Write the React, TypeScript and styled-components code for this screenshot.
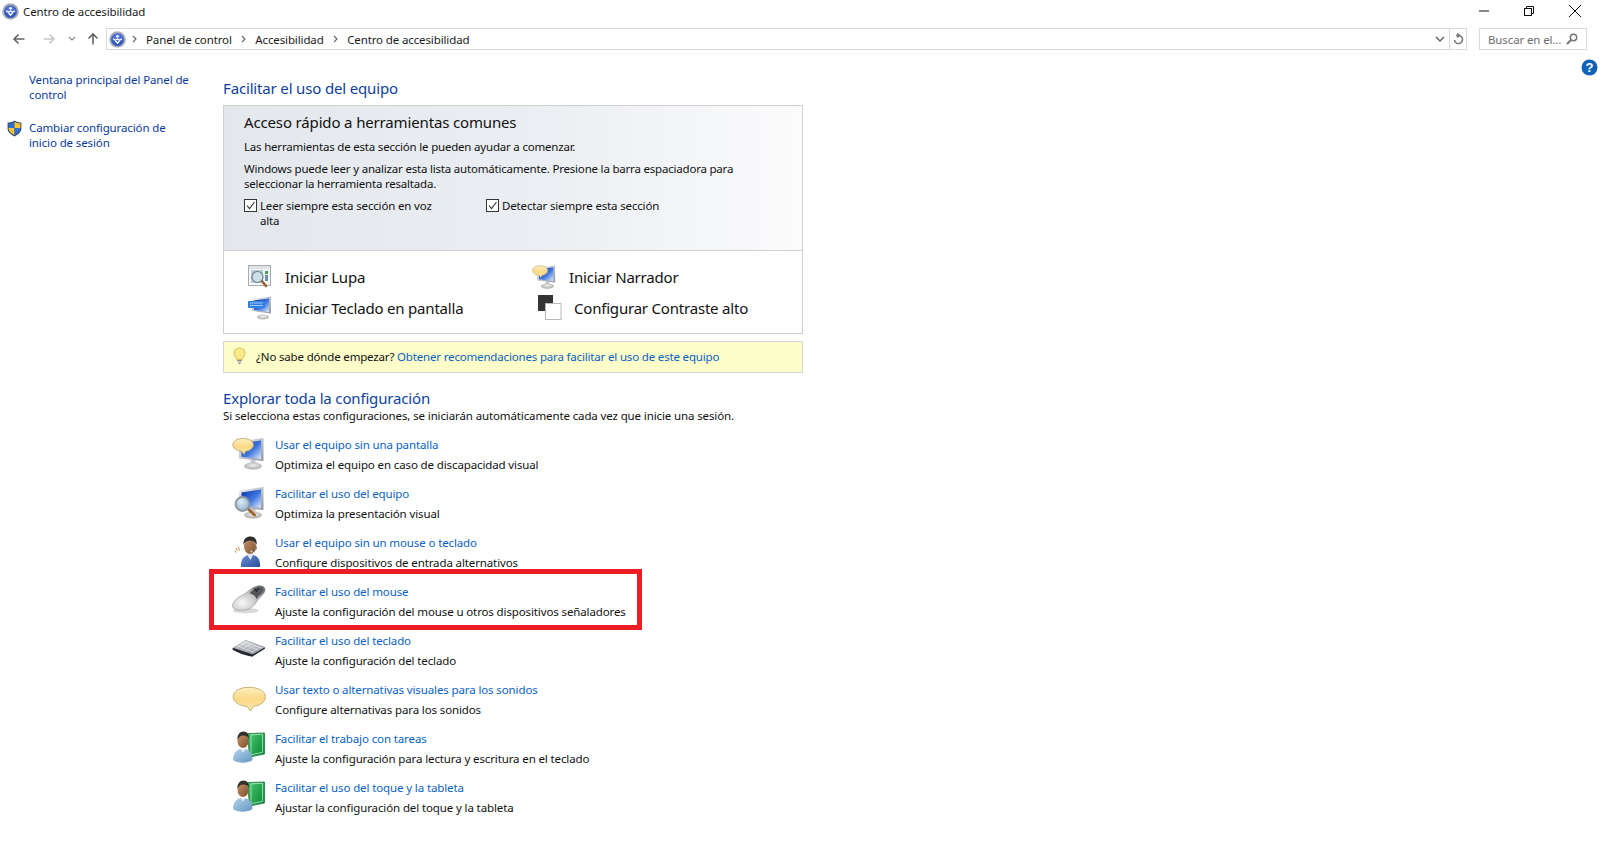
import React from "react";
import styled, { createGlobalStyle } from "styled-components";

const Global = createGlobalStyle`
  html, body { margin: 0; padding: 0; background: #fff; }
  body { font-family: "Noto Sans", "Open Sans", sans-serif; font-size: 11.5px; letter-spacing: -0.12px; color: #111; }
  * { box-sizing: border-box; }
`;

const Page = styled.div`
  width: 1600px; height: 858px; overflow: hidden; display: flex; flex-direction: column; background: #fff;
`;
const TitleBar = styled.div`
  height: 27px; display: flex; align-items: center; padding: 0 0 4px 2px; gap: 4px; flex: none;
`;
const TitleText = styled.span`
  flex: 1; color: #1a1a1a;
`;
const WindowButtons = styled.div`
  display: flex; align-items: center; height: 20px; margin-top: -2px; padding-right: 18px; gap: 33px;
`;
const NavBar = styled.div`
  height: 24px; display: flex; align-items: center; flex: none; padding-left: 12px;
`;
const NavButtons = styled.div`
  display: flex; align-items: center; width: 94px; flex: none;
`;
const AddressBar = styled.div`
  width: 1361px; height: 22px; border: 1px solid #d9d9d9; display: flex; align-items: center; padding-left: 2px; flex: none;
`;
const Crumb = styled.span`
  color: #1a1a1a; margin-right: 9.5px;
`;
const CrumbSep = styled.svg`
  margin-right: 9px; flex: none;
`;
const AddressEnd = styled.div`
  margin-left: auto; display: flex; align-items: center; height: 100%;
`;
const RefreshCell = styled.div`
  width: 17px; height: 100%; border-left: 1px solid #d9d9d9; margin-left: 4px; display: flex; align-items: center; justify-content: center;
`;
const SearchBox = styled.div`
  width: 108px; height: 22px; border: 1px solid #d9d9d9; margin-left: 12px; display: flex; align-items: center; justify-content: space-between; padding: 0 8px 0 8px; color: #6d6d6d; flex: none;
`;
const Body = styled.div`
  flex: 1; display: flex; min-height: 0;
`;
const Sidebar = styled.nav`
  width: 223px; flex: none; padding: 21px 0 0 7px; display: flex; flex-direction: column; gap: 18px;
`;
const SideItem = styled.div`
  display: flex; align-items: flex-start; gap: 7px;
`;
const SideIconSlot = styled.div`
  width: 15px; flex: none;
`;
const SideLink = styled.a`
  width: 165px; color: #0a3a9e; line-height: 15px;
`;
const Main = styled.main`
  width: 580px; flex: none; padding-top: 26px;
`;
const Heading = styled.h2`
  margin: 0; font-weight: 400; font-size: 15px; letter-spacing: -0.16px; line-height: 22px; color: #0f3f9f;
`;
const Panel = styled.section`
  margin-top: 6px; border: 1px solid #cfcfcf; height: 229px; display: flex; flex-direction: column;
`;
const PanelTop = styled.div`
  height: 145px; flex: none; padding: 5px 20px 0; background: linear-gradient(90deg, #e4e8ed 0%, #ebeef2 55%, #fbfbfc 100%); border-bottom: 1px solid #cfcfcf;
`;
const PanelTitle = styled.h3`
  margin: 0; font-weight: 400; font-size: 15px; letter-spacing: -0.15px; line-height: 22px; color: #111;
`;
const PanelText = styled.p`
  margin: ${p => p.$top}px 0 0; line-height: 15px; letter-spacing: -0.2px; color: #111; width: 500px;
`;
const CheckRow = styled.div`
  display: flex; margin-top: 7px;
`;
const CheckItem = styled.label`
  width: 242px; display: flex; gap: 3px; line-height: 15px; letter-spacing: -0.16px; color: #111;
`;
const CheckBox = styled.span`
  width: 13px; height: 13px; margin-top: 1px; border: 1px solid #333; background: #fff; display: flex; flex: none; align-items: center; justify-content: center;
`;
const CheckLabel = styled.span`
  width: 175px;
`;
const Tools = styled.div`
  flex: 1; display: grid; grid-template-columns: 285px 1fr; grid-auto-rows: 31px; padding: 10px 0 0 23px;
`;
const Tool = styled.div`
  display: flex; align-items: center; gap: ${p => p.$gap}px; font-size: 15px; letter-spacing: -0.2px; color: #111; padding-left: ${p => p.$pad || 0}px;
`;
const Hint = styled.div`
  margin-top: 7px; height: 32px; border: 1px solid #d6d6d6; background: #fdfdc9; display: flex; align-items: center; padding: 0 0 2px 9px; gap: 10px; letter-spacing: -0.17px; color: #111;
`;
const Link = styled.a`
  color: #0a62c4;
`;
const SectionHead = styled(Heading)`
  margin-top: 14px;
`;
const SectionSub = styled.p`
  margin: -1px 0 0; line-height: 15px; color: #111;
`;
const Rows = styled.div`
  margin-top: 11px; display: flex; flex-direction: column;
`;
const Row = styled.div`
  position: relative; height: 49px; display: flex; padding-left: 8px; gap: 8px;
`;
const RowIcon = styled.div`
  width: 36px; height: 36px; flex: none; padding-top: ${p => p.$top ?? 2}px;
`;
const RowText = styled.div`
  display: flex; flex-direction: column; gap: 5px; padding-top: 3px; white-space: nowrap;
`;
const RowTitle = styled.a`
  color: #0a62c4; line-height: 15px;
`;
const RowDesc = styled.span`
  color: #111; line-height: 15px;
`;
const Highlight = styled.div`
  position: absolute; left: -14px; top: -12px; width: 433px; height: 61px; border: 5px solid #ee1c25; pointer-events: none;
`;
const Help = styled.div`
  margin-left: auto; margin-right: 2px; margin-top: 8px;
`;
const NavGap = styled.span`
  width: 6px; flex: none;
`;

const AccessIcon = () => (
  <svg width="17" height="17" viewBox="0 0 16 16">
    <defs><radialGradient id="ac" cx=".5" cy=".35" r=".7"><stop offset="0" stopColor="#6688e6" /><stop offset="1" stopColor="#2346b4" /></radialGradient></defs>
    <circle cx="8" cy="8" r="7.8" fill="#a7adb7" />
    <circle cx="8" cy="8" r="6" fill="url(#ac)" />
    <circle cx="8" cy="5" r="1.2" fill="#fff" />
    <path d="M3.800 7.200L6 8.800 8 7.600l2 1.200 2.200-1.600M6 9l2 2.600L10 9" stroke="#fff" strokeWidth="1.200" fill="none" />
  </svg>
);
const Sep = () => (
  <CrumbSep width="5" height="8" viewBox="0 0 5 8"><path d="M1 1l3 3-3 3" stroke="#666" strokeWidth="1.100" fill="none" /></CrumbSep>
);
const Shield = () => (
  <svg width="15" height="17" viewBox="0 0 15 17">
    <path d="M7.500.5C5.500 2 3 2.600.6 2.600v6c0 3.600 3 6 6.900 7.900 3.900-1.900 6.900-4.300 6.900-7.900v-6C12 2.600 9.500 2 7.500.5z" fill="#3a4a68" />
    <path d="M7.500 1.700V8H1.600V3.500c2.200-.1 4.200-.6 5.900-1.800z" fill="#2f6fd0" />
    <path d="M7.500 1.700c1.700 1.200 3.700 1.700 5.900 1.800V8H7.500z" fill="#f6c531" />
    <path d="M1.600 8h5.900v7.200C4.200 13.600 1.800 11.500 1.600 8.600z" fill="#f6c531" />
    <path d="M7.500 8h5.900v.6c-.2 2.900-2.600 5-5.900 6.600z" fill="#2f6fd0" />
  </svg>
);

const Defs = () => (
  <svg width="0" height="0" style={{ position: "absolute" }}>
    <defs>
      <linearGradient id="screen" x1="0" y1="0" x2="1" y2="1"><stop offset="0" stopColor="#0a2fa8" /><stop offset=".55" stopColor="#3f78e0" /><stop offset="1" stopColor="#e4edfb" /></linearGradient>
      <linearGradient id="frame" x1="0" y1="0" x2="1" y2="1"><stop offset="0" stopColor="#eef0f3" /><stop offset="1" stopColor="#8f98a2" /></linearGradient>
      <linearGradient id="bubble" x1="0" y1="0" x2="0" y2="1"><stop offset="0" stopColor="#fff0c0" /><stop offset=".5" stopColor="#fbd886" /><stop offset="1" stopColor="#fdeaaf" /></linearGradient>
      <radialGradient id="base" cx=".5" cy=".4" r=".6"><stop offset="0" stopColor="#f0f0f0" /><stop offset="1" stopColor="#aaaaaa" /></radialGradient>
      <radialGradient id="lens" cx=".4" cy=".35" r=".7"><stop offset="0" stopColor="#dcebf5" /><stop offset="1" stopColor="#8fb0c8" /></radialGradient>
      <linearGradient id="skin" x1="0" y1="0" x2="1" y2="1"><stop offset="0" stopColor="#c49068" /><stop offset="1" stopColor="#7d5230" /></linearGradient>
      <linearGradient id="shirt" x1="0" y1="0" x2="1" y2="1"><stop offset="0" stopColor="#b4d4ec" /><stop offset="1" stopColor="#6496c2" /></linearGradient>
      <linearGradient id="agent" x1="0" y1="0" x2="1" y2="1"><stop offset="0" stopColor="#6e8fd6" /><stop offset="1" stopColor="#2b4c99" /></linearGradient>
      <linearGradient id="book" x1="0" y1="0" x2="1" y2="1"><stop offset="0" stopColor="#3fc16a" /><stop offset="1" stopColor="#0e8a36" /></linearGradient>
      <radialGradient id="mouseb" cx=".3" cy=".7" r=".85"><stop offset="0" stopColor="#f8f8f8" /><stop offset=".5" stopColor="#c6c6c6" /><stop offset="1" stopColor="#6f6f6f" /></radialGradient>
      <linearGradient id="keyb" x1="0" y1="0" x2="0" y2="1"><stop offset="0" stopColor="#d6d8dd" /><stop offset="1" stopColor="#8e929a" /></linearGradient>
    </defs>
  </svg>
);

const Monitor = () => (
  <g>
    <ellipse cx="21" cy="30" rx="9" ry="3.500" fill="url(#base)" />
    <rect x="18.500" y="24" width="5" height="4" fill="#c4c8cc" />
    <path d="M7 5.500l24.500-3.500v23L7 22.500z" fill="url(#frame)" />
    <path d="M9.500 7.500l19.500-3v18.500L9.500 20.800z" fill="url(#screen)" />
  </g>
);
const Bubble = () => (
  <path d="M11 2.500c6 0 10.500 2.600 10.500 6.300s-4.500 6.400-8 6.500l-1.300 3.400-2.700-3.500C5 14.800.8 12.400.8 8.800.8 5.100 5 2.500 11 2.500z" fill="url(#bubble)" stroke="#b39a57" strokeWidth=".7" />
);
const Loupe = () => (
  <g>
    <path d="M15 23l7.500 7" stroke="#a5632c" strokeWidth="3" strokeLinecap="round" />
    <circle cx="10.500" cy="19" r="7" fill="url(#lens)" stroke="#8b959e" strokeWidth="1.800" />
  </g>
);
const MonitorBubble = () => <svg width="36" height="34" viewBox="0 0 34 34"><Monitor /><Bubble /></svg>;
const MonitorLoupe = () => <svg width="36" height="34" viewBox="0 0 34 34"><Monitor /><Loupe /></svg>;
const AgentIcon = () => (
  <svg width="36" height="34" viewBox="0 0 34 34">
    <path d="M9 33c-.5-7 2.500-11 7-12h5c5 1 7.500 5 7 12z" fill="url(#agent)" />
    <path d="M14.500 20l4 6 3-6z" fill="#e3e9f4" />
    <ellipse cx="18" cy="12.500" rx="6" ry="7.500" fill="url(#skin)" />
    <path d="M11.500 11c-.5-6 3-8.500 7-8.500s7 3 6 8.500c-1-3-3-4.500-6.500-4.500s-5.500 1.500-6.500 4.500z" fill="#2b2b2b" />
    <path d="M24 12c1 3-.5 5-4 5.500" stroke="#555" strokeWidth=".9" fill="none" />
    <circle cx="19.500" cy="17.500" r="1" fill="#e0e0e0" />
    <path d="M4 14l1.500 3M6.500 13l1 3.500M2.500 17l2 1.500" stroke="#e28a55" strokeWidth="1" />
  </svg>
);
const MouseIcon = () => (
  <svg width="36" height="30" viewBox="0 0 34 28">
    <ellipse cx="14" cy="25" rx="12" ry="2.500" fill="#d8d8d8" />
    <path d="M1.500 20c.5-5 6-8 10.500-10.500C16.500 7 20 2.500 25.500 1.500c4.500-.7 7.500 1.500 6.500 5-1 3.500-4.500 5.500-7 9-2.500 4-5 8-12.500 9C6 25 1 24 1.500 20z" fill="url(#mouseb)" stroke="#8a8a8a" strokeWidth=".5" />
    <path d="M17.500 8.500C20 6 23 3.500 26.500 3c3-.3 4.500 1 3.800 3.200-.8 2.500-4.300 4.800-6.300 8-.5-3-3-5-6.500-5.700z" fill="#53575c" />
    <path d="M22 4l2 2.500 2-3.300" stroke="#1e2023" strokeWidth="1.200" fill="none" />
  </svg>
);
const KeyboardIcon = () => (
  <svg width="36" height="26" viewBox="0 0 34 24.500">
    <path d="M1.500 12.500L14 5l18 6.500v1.500L20 20.500c-7-1-13-3.500-18.500-6.500z" fill="#22252b" />
    <path d="M1.500 12L14 5l18 6.500-11.500 7z" fill="url(#keyb)" />
    <path d="M6 11.500l9-5M10 13.500l9-5M14 15l9-5M19 16.500l9-5.500M5 10l17 6.500M9 8l17 6.500M12 6.500l17 6" stroke="#fff" strokeWidth=".6" opacity=".75" />
  </svg>
);
const BubbleIcon = () => (
  <svg width="36" height="30" viewBox="0 0 34 28">
    <path d="M17 2c9 0 15.500 3.800 15.500 9 0 5-5 8.300-11.500 9l-2.500 4.500-3.300-4.500C8 19.500 2 16 2 11c0-5.200 6-9 15-9z" fill="url(#bubble)" stroke="#bfa562" strokeWidth=".8" />
  </svg>
);
const PersonBook = () => (
  <svg width="36" height="34" viewBox="0 0 34 34">
    <path d="M15.500 3.500l17-.5v21l-15 3z" fill="url(#book)" stroke="#1f7a3a" strokeWidth=".8" />
    <path d="M19 4.800l11.500-.5v18l-11.500 2.500z" fill="url(#book)" stroke="#e8f7ec" strokeWidth=".6" />
    <path d="M1 30c0-7 4-10 7-11h5c4 1.500 7.500 4 7.500 11-5 3.500-15 3.500-19.500 0z" fill="url(#shirt)" />
    <path d="M8.500 19l2.500 3.500 2.500-3.500z" fill="#e9f1f7" />
    <ellipse cx="11" cy="11" rx="5.500" ry="7" fill="url(#skin)" />
    <path d="M5.500 10C5 4.500 8 1.500 11.500 1.500s6 3 5.500 7.500c-1-2.500-3-3.500-6-3.500S7 7 5.500 10z" fill="#33302c" />
  </svg>
);
const MagnifierIcon = () => (
  <svg width="26" height="25" viewBox="0 0 26 25">
    <rect x="1.500" y="1.500" width="22" height="20" fill="#f6f7f9" stroke="#a7adb3" />
    <rect x="2" y="2" width="21" height="3" fill="#dfe3e8" />
    <rect x="4" y="6" width="12" height="13" fill="#b9cbdd" />
    <rect x="18" y="7" width="3" height="3" fill="#3aa655" /><rect x="18" y="11" width="3" height="6" fill="#6b8db0" />
    <path d="M14 16l5 6" stroke="#9a5b2a" strokeWidth="2.400" strokeLinecap="round" />
    <circle cx="10.500" cy="13" r="5.500" fill="#cfe2ea" fillOpacity=".9" stroke="#6f7f8c" strokeWidth="1.200" />
  </svg>
);
const KeyMonitor = () => (
  <svg width="26" height="25" viewBox="0 0 26 25">
    <ellipse cx="16" cy="22" rx="6" ry="2.500" fill="url(#base)" />
    <path d="M5 4l19-2.500v17L5 16z" fill="url(#frame)" />
    <path d="M7 5.500L22 3.500v13.500L7 15z" fill="url(#screen)" />
    <rect x="1" y="6" width="17" height="7" rx="1" fill="#2f7fe0" />
    <path d="M3 8h13M3 10.500h13" stroke="#e8f2ff" strokeWidth="1.200" strokeDasharray="1.300 .8" />
  </svg>
);
const NarratorIcon = () => (
  <svg width="25" height="25" viewBox="0 0 34 34"><Monitor /><Bubble /></svg>
);
const ContrastIcon = () => (
  <svg width="24" height="25" viewBox="0 0 24 25">
    <rect x="0" y="0" width="15" height="16" fill="#333" />
    <rect x="7.500" y="8.500" width="15.500" height="16" fill="#fff" stroke="#b8b8b8" />
  </svg>
);
const Bulb = () => (
  <svg width="13" height="18" viewBox="0 0 13 18">
    <path d="M6.500 1C3 1 1 3.300 1 6c0 2.500 2 4 2.700 6.500h5.600C10 10 12 8.500 12 6c0-2.700-2-5-5.500-5z" fill="#fbe98a" stroke="#c9b24f" strokeWidth=".8" />
    <path d="M4.200 13.500h4.600M4.700 15h3.600M5.600 16.500h1.800" stroke="#8a8f94" strokeWidth="1" />
  </svg>
);
const Check = () => (
  <svg width="11" height="11" viewBox="0 0 11 11"><path d="M2 5.500l2.500 3L9.500 2" stroke="#333" strokeWidth="1.100" fill="none" /></svg>
);

const items = [
  { t: "Usar el equipo sin una pantalla", d: "Optimiza el equipo en caso de discapacidad visual", i: <MonitorBubble /> },
  { t: "Facilitar el uso del equipo", d: "Optimiza la presentación visual", i: <MonitorLoupe /> },
  { t: "Usar el equipo sin un mouse o teclado", d: "Configure dispositivos de entrada alternativos", i: <AgentIcon /> },
  { t: "Facilitar el uso del mouse", d: "Ajuste la configuración del mouse u otros dispositivos señaladores", i: <MouseIcon />, top: 3, mark: true },
  { t: "Facilitar el uso del teclado", d: "Ajuste la configuración del teclado", i: <KeyboardIcon />, top: 5 },
  { t: "Usar texto o alternativas visuales para los sonidos", d: "Configure alternativas para los sonidos", i: <BubbleIcon />, top: 6 },
  { t: "Facilitar el trabajo con tareas", d: "Ajuste la configuración para lectura y escritura en el teclado", i: <PersonBook /> },
  { t: "Facilitar el uso del toque y la tableta", d: "Ajustar la configuración del toque y la tableta", i: <PersonBook /> },
];

export default function App() {
  return (
    <Page>
      <Global />
      <Defs />
      <TitleBar>
        <AccessIcon />
        <TitleText>Centro de accesibilidad</TitleText>
        <WindowButtons>
          <svg width="12" height="12" viewBox="0 0 12 12"><path d="M1 6h10" stroke="#111" /></svg>
          <svg width="12" height="12" viewBox="0 0 12 12" fill="none" stroke="#111"><rect x="1.500" y="3.500" width="7" height="7" /><path d="M3.500 3.500v-2h7v7h-2" /></svg>
          <svg width="14" height="14" viewBox="0 0 14 14"><path d="M1 1l12 12M13 1L1 13" stroke="#111" /></svg>
        </WindowButtons>
      </TitleBar>
      <NavBar>
        <NavButtons>
          <svg width="14" height="14" viewBox="0 0 14 14" fill="none" stroke="#666" strokeWidth="1.600"><path d="M12.500 7H2M6.500 2.500L2 7l4.500 4.500" /></svg>
          <svg width="14" height="14" style={{ marginLeft: 16 }} viewBox="0 0 14 14" fill="none" stroke="#c8c8c8" strokeWidth="1.600"><path d="M1.500 7H12M7.500 2.500L12 7l-4.500 4.500" /></svg>
          <svg width="8" height="6" style={{ marginLeft: 12 }} viewBox="0 0 8 6"><path d="M1 1l3 3 3-3" stroke="#888" strokeWidth="1.200" fill="none" /></svg>
          <svg width="14" height="14" style={{ marginLeft: 10 }} viewBox="0 0 14 14" fill="none" stroke="#666" strokeWidth="1.600"><path d="M7 12.500V2M2.500 6.500L7 2l4.500 4.500" /></svg>
        </NavButtons>
        <AddressBar>
          <AccessIcon />
          <NavGap />
          <Sep />
          <Crumb>Panel de control</Crumb><Sep />
          <Crumb>Accesibilidad</Crumb><Sep />
          <Crumb>Centro de accesibilidad</Crumb>
          <AddressEnd>
            <svg width="10" height="7" viewBox="0 0 10 7"><path d="M1 1l4 4 4-4" stroke="#666" strokeWidth="1.500" fill="none" /></svg>
            <RefreshCell>
              <svg width="12" height="13" viewBox="0 0 12 13" fill="none" stroke="#777" strokeWidth="1.600"><path d="M4 2.500h2.500a4 4 0 1 1-4 4.500" /><path d="M5 .5l2.500 2L5 4.500" /></svg>
            </RefreshCell>
          </AddressEnd>
        </AddressBar>
        <SearchBox>
          <span>Buscar en el...</span>
          <svg width="12" height="12" viewBox="0 0 12 12" fill="none" stroke="#777" strokeWidth="1.500"><circle cx="7.500" cy="4.500" r="3.200" /><path d="M5 7l-4 4" strokeWidth="2" /></svg>
        </SearchBox>
      </NavBar>
      <Body>
        <Sidebar>
          <SideItem><SideIconSlot /><SideLink>Ventana principal del Panel de control</SideLink></SideItem>
          <SideItem><SideIconSlot><Shield /></SideIconSlot><SideLink>Cambiar configuración de inicio de sesión</SideLink></SideItem>
        </Sidebar>
        <Main>
          <Heading>Facilitar el uso del equipo</Heading>
          <Panel>
            <PanelTop>
              <PanelTitle>Acceso rápido a herramientas comunes</PanelTitle>
              <PanelText $top={6}>Las herramientas de esta sección le pueden ayudar a comenzar.</PanelText>
              <PanelText $top={7}>Windows puede leer y analizar esta lista automáticamente. Presione la barra espaciadora para seleccionar la herramienta resaltada.</PanelText>
              <CheckRow>
                <CheckItem><CheckBox><Check /></CheckBox><CheckLabel>Leer siempre esta sección en voz alta</CheckLabel></CheckItem>
                <CheckItem><CheckBox><Check /></CheckBox><span>Detectar siempre esta sección</span></CheckItem>
              </CheckRow>
            </PanelTop>
            <Tools>
              <Tool $gap={12}><MagnifierIcon />Iniciar Lupa</Tool>
              <Tool $gap={12}><NarratorIcon />Iniciar Narrador</Tool>
              <Tool $gap={12}><KeyMonitor />Iniciar Teclado en pantalla</Tool>
              <Tool $gap={12} $pad={6}><ContrastIcon />Configurar Contraste alto</Tool>
            </Tools>
          </Panel>
          <Hint>
            <Bulb />
            <span>¿No sabe dónde empezar? <Link>Obtener recomendaciones para facilitar el uso de este equipo</Link></span>
          </Hint>
          <SectionHead>Explorar toda la configuración</SectionHead>
          <SectionSub>Si selecciona estas configuraciones, se iniciarán automáticamente cada vez que inicie una sesión.</SectionSub>
          <Rows>
            {items.map(it => (
              <Row key={it.t}>
                <RowIcon $top={it.top}>{it.i}</RowIcon>
                <RowText>
                  <RowTitle>{it.t}</RowTitle>
                  <RowDesc>{it.d}</RowDesc>
                </RowText>
                {it.mark && <Highlight />}
              </Row>
            ))}
          </Rows>
        </Main>
        <Help>
          <svg width="17" height="17" viewBox="0 0 17 17">
            <circle cx="8.500" cy="8.500" r="8" fill="#0f62b8" />
            <text x="8.500" y="13" textAnchor="middle" fontFamily="Liberation Sans, sans-serif" fontWeight="700" fontSize="13" fill="#fff">?</text>
          </svg>
        </Help>
      </Body>
    </Page>
  );
}
